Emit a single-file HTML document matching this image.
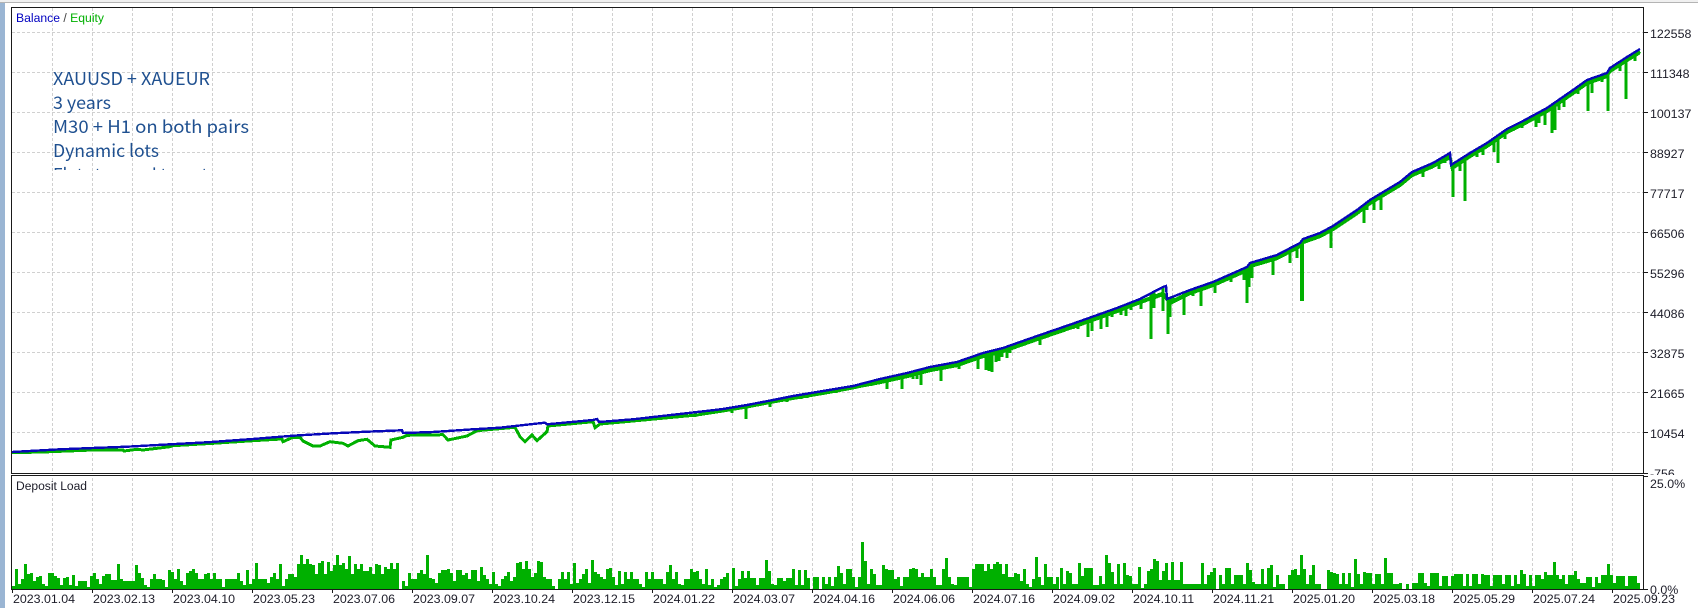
<!DOCTYPE html>
<html>
<head>
<meta charset="utf-8">
<style>
html,body{margin:0;padding:0;background:#fff;width:1698px;height:608px;overflow:hidden}
svg{display:block;position:absolute;left:0;top:0}
text{font-family:"Liberation Sans",sans-serif;font-size:12.4px;fill:#1c1c28}
.o{font-family:"Noto Sans CJK SC","Liberation Sans",sans-serif;font-size:17.5px;fill:#1f5090}
</style>
</head>
<body>
<svg width="1698" height="608" viewBox="0 0 1698 608" xmlns="http://www.w3.org/2000/svg">
<defs>
<clipPath id="below"><polygon points="12,451 60,448.3 93,447 127,445.7 170,443.3 207,441.3 253,438 293,434.7 333,432.3 367,430.7 402,429.3 403,432 433,431 473,428.3 500,426.7 533,423 545,421.7 547,423.3 593,419 597,418 599,421 633,418.3 700,410.7 723,408 747,404 773,399 793,395 823,390 853,385 880,378 907,372 930,366 957,361 983,352 1003,347 1020,341 1040,334 1072,323 1117,307 1140,298 1163,286 1166,285 1167,298 1190,289 1213,281 1247,266 1250,262 1277,254 1300,242 1303,238 1320,232 1333,225 1357,209 1370,199 1400,181 1412,171 1433,162 1450,152 1451,164 1470,152 1487,142 1507,128 1523,120 1547,107 1573,89 1587,79 1607,72 1610,67 1627,56 1640,48 1643,48 1643,473 12,473"/></clipPath>
<clipPath id="over"><rect x="12" y="8" width="400" height="162"/></clipPath>
<clipPath id="neg"><rect x="1645" y="400" width="53" height="75"/></clipPath>
</defs>

<rect x="0" y="0" width="1698" height="2" fill="#f0f0f0"/>
<rect x="0" y="2" width="1698" height="1" fill="#b4b4b4"/>
<rect x="0" y="3" width="5" height="605" fill="#9ab5d3"/>

<!-- grid -->
<g stroke="#d0d0d0" stroke-width="1" stroke-dasharray="3 2" fill="none" shape-rendering="crispEdges">
<path d="M12 32.5H1643M12 72.5H1643M12 112.5H1643M12 152.5H1643M12 192.5H1643M12 232.5H1643M12 272.5H1643M12 312.5H1643M12 352.5H1643M12 392.5H1643M12 432.5H1643"/>
<path d="M52.5 8V589M92.5 8V589M132.5 8V589M172.5 8V589M212.5 8V589M252.5 8V589M292.5 8V589M332.5 8V589M372.5 8V589M412.5 8V589M452.5 8V589M492.5 8V589M532.5 8V589M572.5 8V589M612.5 8V589M652.5 8V589M692.5 8V589M732.5 8V589M772.5 8V589M812.5 8V589M852.5 8V589M892.5 8V589M932.5 8V589M972.5 8V589M1012.5 8V589M1052.5 8V589M1092.5 8V589M1132.5 8V589M1172.5 8V589M1212.5 8V589M1252.5 8V589M1292.5 8V589M1332.5 8V589M1372.5 8V589M1412.5 8V589M1452.5 8V589M1492.5 8V589M1532.5 8V589M1572.5 8V589M1612.5 8V589"/>
</g>
<rect x="12" y="473" width="1632" height="3" fill="#fff"/>

<!-- overlay text -->
<g clip-path="url(#over)">
<text class="o" x="53" y="85" textLength="157" lengthAdjust="spacingAndGlyphs">XAUUSD + XAUEUR</text>
<text class="o" x="53" y="109" textLength="58" lengthAdjust="spacingAndGlyphs">3 years</text>
<text class="o" x="53" y="133" textLength="196" lengthAdjust="spacingAndGlyphs">M30 + H1 on both pairs</text>
<text class="o" x="53" y="157" textLength="106" lengthAdjust="spacingAndGlyphs">Dynamic lots</text>
<text class="o" x="53" y="181" textLength="155" lengthAdjust="spacingAndGlyphs">Flat stop and target</text>
</g>

<!-- equity -->
<polyline fill="none" stroke="#00b000" stroke-width="3" shape-rendering="crispEdges" points="12,452.7 43,452 93,450 123,450 124,451 137,449.3 143,450 170,446.7 173,445.7 213,443.3 253,440.7 282,439 283,441.7 293,437.3 300,437.3 303,441 313,446 320,446 330,441.7 343,443.3 348,446 358,440.7 367,439.3 375,446 390,447.3 391,440 403,437.3 407,435.3 443,434.7 448,440 467,436 477,430.7 515,427.3 520,436.7 525,441.7 532,435 537,440.7 547,431.7 548,426 593,421.7 595,427.7 600,424 633,421 697,415 723,411 747,407 773,402 793,398.5 823,393.5 853,388 880,381.5 907,375.5 930,369.5 957,364.5 983,355.5 1003,350.5 1020,344.5 1040,337.5 1072,326.5 1117,310.5 1140,301.5 1150,298 1163,293 1170,302 1190,292.5 1213,284.5 1247,269.5 1250,265.5 1277,257.5 1300,245.5 1303,241.5 1320,235.5 1333,228.5 1357,212.5 1370,202.5 1400,184.5 1412,174.5 1433,165.5 1450,156 1452,167 1470,155.5 1487,145.5 1507,131.5 1523,123.5 1547,110.5 1573,92.5 1587,82.5 1607,75.5 1610,70.5 1627,59.5 1640,51.5"/>
<polyline fill="none" stroke="#00b000" stroke-width="2.4" shape-rendering="crispEdges" points="853,388 880,383 907,377 930,371 957,366 983,357 1003,352 1020,346 1040,339 1072,328 1117,312 1140,303 1163,295 1170,304 1190,294 1213,286 1247,271 1250,267 1277,259 1300,247 1303,243 1320,237 1333,230 1357,214 1370,204 1400,186 1412,176 1433,167 1450,158 1452,169 1470,157 1487,147 1507,133 1523,125 1547,112 1573,94 1587,84 1607,77 1610,72 1627,61 1640,53"/>
<g clip-path="url(#below)" fill="none" stroke="#00b000" shape-rendering="crispEdges">
<path stroke-width="2.6" d="M695 0V417M732 0V413M770 0V407M787 0V402M801 0V399M807 0V398M836 0V393M864 0V387M871 0V386M887 0V389M902 0V389M913 0V379M917 0V379M921 0V385M926 0V373M941 0V381M959 0V369M978 0V369M986 0V370M989 0V371M992 0V372M996 0V362M999 0V361M1002 0V357M1007 0V358M1010 0V353M1040 0V345M1047 0V337M1073 0V329M1078 0V329M1088 0V337M1092 0V331M1101 0V329M1107 0V327M1112 0V317M1121 0V315M1126 0V316M1131 0V310M1141 0V309M1154 0V308M1163 0V311M1170 0V317M1173 0V303M1184 0V315M1193 0V296M1201 0V306M1215 0V293M1231 0V282M1244 0V280M1249 0V287M1252 0V278M1258 0V265M1273 0V275M1290 0V263M1297 0V258M1331 0V248M1356 0V215M1364 0V223M1367 0V210M1374 0V210M1381 0V210M1423 0V177M1431 0V169M1439 0V169M1445 0V163M1460 0V171M1477 0V157M1483 0V155M1494 0V152M1498 0V163M1505 0V139M1513 0V131M1522 0V128M1536 0V127M1539 0V123M1545 0V125M1555 0V130M1559 0V110M1564 0V107M1568 0V98M1578 0V94M1592 0V93M1602 0V82M1620 0V71M1635 0V61"/>
<path stroke-width="3" d="M746 0V419M1151 0V339M1168 0V334M1247 0V303M1453 0V197M1465 0V201M1552 0V133M1588 0V111M1608 0V111M1626 0V99"/>
<path stroke-width="4" d="M1302 0V301"/>
</g>

<!-- balance -->
<polyline fill="none" stroke="#0808b8" stroke-width="2.4" shape-rendering="crispEdges" points="12,452 60,449.3 93,448 127,446.7 170,444.3 207,442.3 253,439 293,435.7 333,433.3 367,431.7 402,430.3 403,433 433,432 473,429.3 500,427.7 533,424 545,422.7 547,424.3 593,420 597,419 599,422 633,419.3 700,411.7 723,409 747,405 773,400 793,396 823,391 853,386 880,379 907,373 930,367 957,362 983,353 1003,348 1020,342 1040,335 1072,324 1117,308 1140,299 1163,287 1166,286 1167,299 1190,290 1213,282 1247,267 1250,263 1277,255 1300,243 1303,239 1320,233 1333,226 1357,210 1370,200 1400,182 1412,172 1433,163 1450,153 1451,165 1470,153 1487,143 1507,129 1523,121 1547,108 1573,90 1587,80 1607,73 1610,68 1627,57 1640,49"/>

<!-- deposit load bars -->
<g transform="translate(0,589) scale(1,-1)" fill="#00b000" shape-rendering="crispEdges">
<path d="M12 0V3h3V20h3V5h3V10h3V25h3V15h3V16h3V8h3V12h3V13h3V5h3V3h3V16h3V16h3V13h3V11h3V4h3V11h3V12h3V4h3V14h3V3h3V8h3V8h3V8h3V2h3V13h3V16h3V10h3V5h3V13h3V15h3V15h3V9h3V9h3V25h3V10h3V8h3V8h3V8h3V8h3V24h3V16h3V11h3V4h3V2h3V10h3V15h3V10h3V10h3V9h3V2h3V19h3V17h3V10h3V20h3V8h3V4h3V16h3V18h3V20h3V16h3V10h3V10h3V15h3V16h3V10h3V16h3V10h3V10h3V2h3V10h3V10h3V10h3V10h3V16h3V8h3V4h3V19h3V5h3V10h3V26h3V10h3V10h3V10h3V6h3V12h3V16h3V10h3V25h3V3h3V10h3V15h3V15h3V12h3V25h3V34h3V25h3V30h3V25h3V24h3V15h3V26h3V28h3V15h3V27h3V18h3V24h3V34h3V24h3V26h3V20h3V33h3V15h3V25h3V20h3V25h3V18h3V18h3V22h3V15h3V25h3V24h3V15h3V22h3V20h3V26h3V20h3V26h3V0z"/>
<path d="M402 0V8h3V3h3V16h3V10h3V10h3V16h3V19h3V15h3V34h3V11h3V10h3V6h3V16h3V19h3V19h3V20h3V16h3V8h3V19h3V19h3V14h3V16h3V10h3V19h3V19h3V8h3V22h3V14h3V10h3V5h3V17h3V5h3V3h3V10h3V13h3V17h3V8h3V12h3V26h3V27h3V20h3V28h3V20h3V12h3V16h3V28h3V27h3V12h3V10h3V10h3V3h3V0h3V10h3V17h3V10h3V17h3V5h3V26h3V6h3V10h3V15h3V20h3V6h3V29h3V17h3V15h3V12h3V10h3V20h3V21h3V12h3V4h3V18h3V5h3V17h3V10h3V17h3V10h3V10h3V5h3V2h3V17h3V10h3V17h3V10h3V10h3V10h3V5h3V17h3V24h3V10h3V17h3V5h3V4h3V10h3V10h3V20h3V17h3V18h3V10h3V5h3V20h3V4h3V10h3V2h3V4h3V0z"/>
<path d="M720 0V10h3V12h3V16h3V0h3V21h3V3h3V10h3V18h3V11h3V18h3V11h3V11h3V4h3V11h3V11h3V29h3V18h3V5h3V4h3V11h3V11h3V8h3V11h3V11h3V20h3V4h3V19h3V4h3V19h3V11h3V0h3V12h3V12h3V0h3V12h3V5h3V12h3V3h3V12h3V23h3V16h3V5h3V20h3V20h3V12h3V2h3V12h3V47h3V28h3V5h3V20h3V15h3V4h3V4h3V24h3V20h3V19h3V19h3V10h3V12h3V3h3V12h3V12h3V20h3V21h3V20h3V12h3V16h3V12h3V12h3V20h3V12h3V4h3V4h3V20h3V31h3V12h3V5h3V4h3V12h3V12h3V12h3V12h3V2h3V20h3V25h3V25h3V25h3V18h3V25h3V20h3V25h3V27h3V25h3V15h3V25h3V12h3V12h3V16h3V15h3V8h3V20h3V5h3V2h3V10h3V32h3V12h3V4h3V25h3V12h3V12h3V5h3V12h3V0z"/>
<path d="M1060 0V21h3V5h3V18h3V16h3V5h3V5h3V26h3V13h3V21h3V21h3V21h3V4h3V4h3V13h3V5h3V34h3V26h3V17h3V5h3V25h3V5h3V26h3V14h3V13h3V5h3V5h3V22h3V1h3V5h3V18h3V20h3V30h3V28h3V9h3V18h3V26h3V9h3V27h3V9h3V9h3V27h3V5h3V5h3V5h3V5h3V5h3V5h3V26h3V5h3V14h3V17h3V21h3V0h3V14h3V5h3V21h3V21h3V5h3V14h3V14h3V14h3V5h3V26h3V19h3V7h3V5h3V5h3V20h3V5h3V21h3V24h3V2h3V14h3V5h3V5h3V0h3V14h3V19h3V20h3V14h3V34h3V20h3V5h3V14h3V24h3V5h3V5h3V0h3V0h3V19h3V17h3V16h3V15h3V5h3V16h3V5h3V16h3V2h3V30h3V15h3V5h3V17h3V16h3V16h3V5h3V15h3V15h3V5h3V31h3V16h3V16h3V5h3V5h3V6h3V0z"/>
<path d="M1400 0V0h3V0h3V5h3V0h3V6h3V6h3V16h3V16h3V6h3V3h3V16h3V16h3V16h3V3h3V13h3V13h3V3h3V13h3V15h3V15h3V15h3V3h3V15h3V3h3V15h3V15h3V5h3V15h3V14h3V14h3V3h3V14h3V14h3V14h3V5h3V14h3V14h3V3h3V14h3V5h3V19h3V15h3V3h3V14h3V3h3V14h3V14h3V10h3V17h3V14h3V14h3V27h3V14h3V10h3V14h3V5h3V14h3V14h3V18h3V10h3V6h3V6h3V12h3V12h3V2h3V12h3V6h3V14h3V14h3V25h3V14h3V6h3V13h3V13h3V13h3V3h3V13h3V13h3V13h3V6h3V0z"/>
</g>

<!-- frames -->
<g fill="none" stroke="#1a1a1a" stroke-width="1" shape-rendering="crispEdges">
<path d="M11.5 7.5H1643.5V473.5H11.5Z"/>
<path d="M11.5 475.5H1643.5V589.5H11.5Z"/>
<path d="M1644 32.5h4M1644 72.5h4M1644 112.5h4M1644 152.5h4M1644 192.5h4M1644 232.5h4M1644 272.5h4M1644 312.5h4M1644 352.5h4M1644 392.5h4M1644 432.5h4M1644 473.5h4M1644 476.5h4M1644 589.5h4"/>
<path d="M12.5 590v3M92.5 590v3M172.5 590v3M252.5 590v3M332.5 590v3M412.5 590v3M492.5 590v3M572.5 590v3M652.5 590v3M732.5 590v3M812.5 590v3M892.5 590v3M972.5 590v3M1052.5 590v3M1132.5 590v3M1212.5 590v3M1292.5 590v3M1372.5 590v3M1452.5 590v3M1532.5 590v3M1612.5 590v3"/>
</g>

<!-- legends -->
<text x="16" y="22" textLength="88" lengthAdjust="spacingAndGlyphs"><tspan style="fill:#0000c0">Balance</tspan> <tspan style="fill:#444">/</tspan> <tspan style="fill:#00b000">Equity</tspan></text>
<text x="16" y="490" textLength="71" lengthAdjust="spacingAndGlyphs">Deposit Load</text>

<!-- y labels -->
<text x="1650" y="38">122558</text>
<text x="1650" y="78">111348</text>
<text x="1650" y="118">100137</text>
<text x="1650" y="158">88927</text>
<text x="1650" y="198">77717</text>
<text x="1650" y="238">66506</text>
<text x="1650" y="278">55296</text>
<text x="1650" y="318">44086</text>
<text x="1650" y="358">32875</text>
<text x="1650" y="398">21665</text>
<text x="1650" y="438">10454</text>
<text x="1650" y="478" clip-path="url(#neg)">-756</text>
<text x="1650" y="488">25.0%</text>
<text x="1650" y="594">0.0%</text>

<!-- x labels -->
<text x="13" y="603">2023.01.04</text>
<text x="93" y="603">2023.02.13</text>
<text x="173" y="603">2023.04.10</text>
<text x="253" y="603">2023.05.23</text>
<text x="333" y="603">2023.07.06</text>
<text x="413" y="603">2023.09.07</text>
<text x="493" y="603">2023.10.24</text>
<text x="573" y="603">2023.12.15</text>
<text x="653" y="603">2024.01.22</text>
<text x="733" y="603">2024.03.07</text>
<text x="813" y="603">2024.04.16</text>
<text x="893" y="603">2024.06.06</text>
<text x="973" y="603">2024.07.16</text>
<text x="1053" y="603">2024.09.02</text>
<text x="1133" y="603">2024.10.11</text>
<text x="1213" y="603">2024.11.21</text>
<text x="1293" y="603">2025.01.20</text>
<text x="1373" y="603">2025.03.18</text>
<text x="1453" y="603">2025.05.29</text>
<text x="1533" y="603">2025.07.24</text>
<text x="1613" y="603">2025.09.23</text>
</svg>
</body>
</html>
